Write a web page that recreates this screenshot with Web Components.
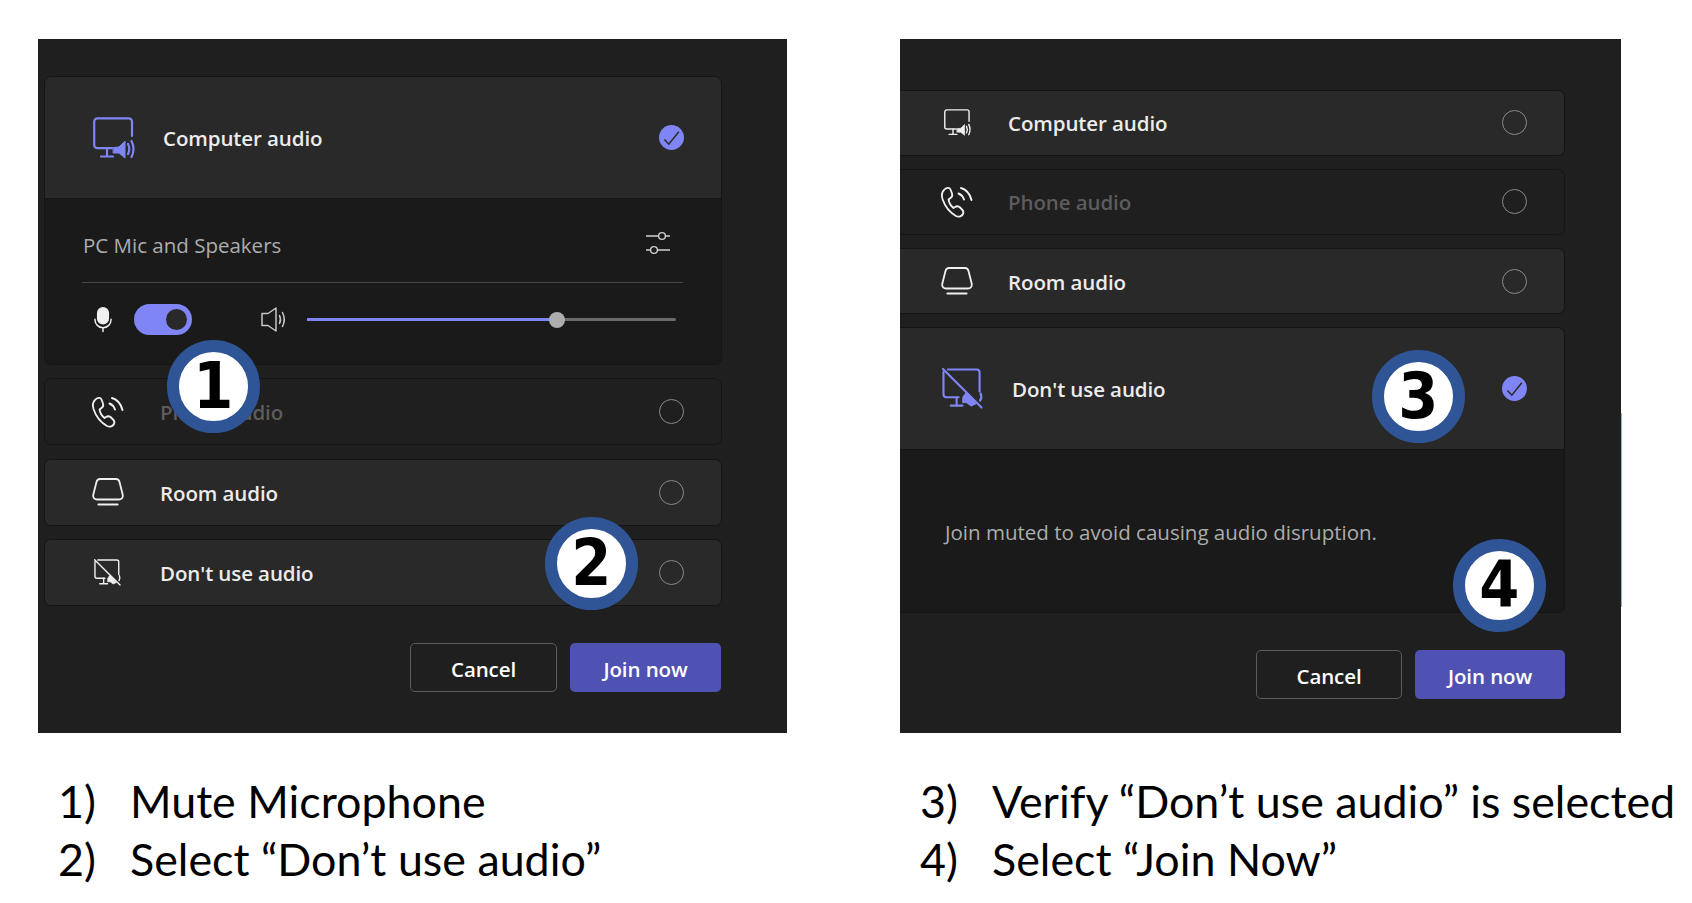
<!DOCTYPE html>
<html lang="en"><head><meta charset="utf-8"><title>Join audio steps</title>
<style>
html,body{margin:0;background:#fff}
body{width:1692px;height:903px;overflow:hidden;font-family:"Open Sans","Liberation Sans",sans-serif}
</style></head><body>
<step-page>
  <step-column>
    <dark-panel slot="panel" pad="37px 65px 0 6px">
      <option-stack gap="13.5px">
        <audio-option icon="computer" label="Computer audio" selected pad="48" cell="70" isize="42" nudge="1">
          <mic-settings></mic-settings>
        </audio-option>
        <audio-option icon="phone" label="Phone audio" disabled tall pad="47" cell="68" isize="32"></audio-option>
        <audio-option icon="room" label="Room audio" tall pad="47" cell="68" isize="32"></audio-option>
        <audio-option icon="dont" label="Don't use audio" tall pad="49" cell="66" isize="27"></audio-option>
      </option-stack>
      <action-bar top="36.500px" right="1px" cancel="147" join="151"></action-bar>
      <step-badge n="1" x="129" y="300.5"></step-badge>
      <step-badge n="2" x="506.5" y="477.5"></step-badge>
    </dark-panel>
    <step-list slot="list">
      <step-line n="1)" text="Mute Microphone"></step-line>
      <step-line n="2)" text="Select “Don’t use audio”"></step-line>
    </step-list>
  </step-column>
  <step-column>
    <dark-panel slot="panel" pad="50.5px 56px 0 0">
      <option-stack gap="13.3px">
        <audio-option icon="computer" label="Computer audio" pad="44" cell="64" isize="27" open-left></audio-option>
        <audio-option icon="phone" label="Phone audio" disabled pad="41" cell="67" isize="32" open-left></audio-option>
        <audio-option icon="room" label="Room audio" pad="41" cell="67" isize="32" open-left></audio-option>
        <audio-option icon="dont" label="Don't use audio" selected pad="42" cell="70" isize="41" open-left>
          <muted-note>Join muted to avoid causing audio disruption.</muted-note>
        </audio-option>
      </option-stack>
      <action-bar top="37px" right="0" cancel="146" join="150"></action-bar>
      <step-badge n="3" x="471.5" y="310.5"></step-badge>
      <step-badge n="4" x="552.5" y="499.5"></step-badge>
      <edge-sliver></edge-sliver>
    </dark-panel>
    <step-list slot="list">
      <step-line n="3)" text="Verify “Don’t use audio” is selected"></step-line>
      <step-line n="4)" text="Select “Join Now”"></step-line>
    </step-list>
  </step-column>
</step-page>
<script>
const ICONS={
computer:`<svg viewBox="0 0 42 42" fill="none" stroke="currentColor" stroke-width="2.2" stroke-linecap="round" stroke-linejoin="round"><path d="M39 19V4.5a3.2 3.2 0 0 0-3.2-3.2H4.400a3.2 3.2 0 0 0-3.200 3.200V28a3.200 3.200 0 0 0 3.200 3.200H19"/><path d="M14 31.500V39M8 39.500H20"/><path d="M20.500 30.500L26 30 32 24V41L26 36 20.500 36Z" fill="currentColor" stroke-width="1"/><path d="M35 27q2.600 5 0 10M38.500 24q4 8 0 16"/></svg>`,
dont:`<svg viewBox="0 0 42 42" fill="none" stroke="currentColor" stroke-width="2.200" stroke-linecap="round" stroke-linejoin="round"><path d="M6 1.500H35.500a3 3 0 0 1 3 3V24"/><path d="M1.500 4V27a3 3 0 0 0 3 3H17"/><path d="M15 30V38M9 38.500H21"/><path d="M1 1L40.500 40.500"/><path d="M21.500 29.500L25 25 35 36.500 30 39 25 35.500 21.500 35.500Z" fill="currentColor" stroke-width="1"/><path d="M39.500 26q1.800 4-.5 7.500"/></svg>`,
phone:`<svg viewBox="0 0 32 32" fill="none" stroke="currentColor" stroke-width="1.800" stroke-linecap="round" stroke-linejoin="round"><path d="M3 4C1 6 .3 9 1.500 13 3.500 19 8 26 15 30 18 31.500 21 30 22 28 23 26 22.500 25 21 23.500L18.500 21C17 20 15.500 20 14 21L12.500 22C10 20 8 16.500 7.500 13.500L9.500 12C11 11 11.500 9 11 7.500L9.500 3.500C8.500 1 5 1.500 3 4Z"/><path d="M17.500 7.500C20 8.500 22 10.500 23 13.500" stroke-width="2"/><path d="M20 2C25 3.500 29 8 30.500 14" stroke-width="2"/></svg>`,
room:`<svg viewBox="0 0 32 28" fill="none" stroke="currentColor" stroke-width="1.800" stroke-linecap="round" stroke-linejoin="round"><path d="M8 1H24C26 1 27 2 27.500 4L30.800 17C31.300 20 29 21.500 27 21.500H5C3 21.500 .7 20 1.200 17L4.500 4C5 2 6 1 8 1Z"/><path d="M6.500 26.500H25.500" stroke-width="2.200"/></svg>`,
mic:`<svg viewBox="0 0 18.400 25" fill="none" stroke="currentColor" stroke-width="1.500" stroke-linecap="round"><rect x="3" y="0" width="12.400" height="18" rx="6.200" fill="currentColor" stroke="none"/><path d="M1 12.500v.5a8.200 8.200 0 0 0 16.400 0v-.5M9.200 21.500V25"/></svg>`,
speaker:`<svg viewBox="0 0 26 25" fill="none" stroke="currentColor" stroke-width="1.500" stroke-linecap="round" stroke-linejoin="round"><path d="M1 6.500H7L15 1V24L7 18.500H1Z"/><path d="M18.500 8.500q2 4 0 8M21.500 5.500q3.500 7 0 14"/></svg>`,
sliders:`<svg viewBox="0 0 24 20" fill="none" stroke="currentColor" stroke-width="1.400"><path d="M0 4H12.500M19.500 4H24M0 18H4.500M11.500 18H24"/><circle cx="16" cy="4" r="3.400"/><circle cx="8" cy="18" r="3.400"/></svg>`
};
function el(tag,html,init){customElements.define(tag,class extends HTMLElement{constructor(){super();this.attachShadow({mode:"open"});}
 connectedCallback(){this.shadowRoot.innerHTML=typeof html==="function"?html(this):html;if(init)init(this);}});}
const a=(e,n,d)=>e.hasAttribute(n)?e.getAttribute(n):d;

el("step-page",`<style>:host{display:grid;grid-template-columns:749px 721px;column-gap:113px;padding:39px 0 0 38px;box-sizing:border-box;height:903px}</style><slot></slot>`);
el("step-column",`<style>:host{display:flex;flex-direction:column;min-width:0}</style><slot name="panel"></slot><slot name="list"></slot>`);
el("dark-panel",e=>`<style>:host{display:block;position:relative;box-sizing:border-box;height:694px;background:#1f1f1f;padding:${a(e,"pad")};color:#fff;font-family:"Open Sans","Liberation Sans",sans-serif}</style><slot></slot>`);
el("option-stack",e=>`<style>:host{display:flex;flex-direction:column;gap:${a(e,"gap")}}</style><slot></slot>`);
el("audio-option",e=>{
 const sel=e.hasAttribute("selected"),dis=e.hasAttribute("disabled"),open=e.hasAttribute("open-left"),s=a(e,"isize"),col=sel?"#7f85f5":"#f0f0f0",n=+a(e,"nudge","0");
 return `<style>:host{display:block;box-sizing:border-box;border:1px solid #151515;${open?"border-left:0;":""}border-radius:${open?"0 7px 7px 0":"7px"};overflow:hidden;background:#1a1a1a}
 .head{height:${sel?120.5:(e.hasAttribute("tall")?65:64)}px;display:flex;align-items:center;padding:0 ${open?37:37.5}px 0 ${a(e,"pad")}px;background:${dis?"#1f1f1f":"#292929"};${sel?"border-bottom:1px solid #151515;":""}}
 .cell{width:${a(e,"cell")}px;flex:none;display:flex;align-items:center;color:${col};padding-top:${n}px;}
 .label{flex:1;font-size:20.500px;font-weight:600;color:${dis?"#5c5c5c":"#ececec"};letter-spacing:-.1px;white-space:nowrap;padding-top:${1+n}px}
 </style><div class="head"><span class="cell"><audio-icon name="${a(e,"icon")}" size="${s}"></audio-icon></span><span class="label">${a(e,"label")}</span><choice-mark ${sel?"on":""}></choice-mark></div><slot></slot>`;});
el("audio-icon",e=>`<style>:host{display:block;width:${a(e,"size")}px;line-height:0}svg{display:block;width:100%;height:auto;overflow:visible}</style>${ICONS[a(e,"name")]}`);
el("choice-mark",e=>e.hasAttribute("on")?`<style>:host{display:block;width:25px;height:25px;flex:none}svg{display:block}</style><svg width="25" height="25" viewBox="0 0 25 25"><circle cx="12.500" cy="12.500" r="12.500" fill="#7f85f5"/><path d="M5.500 14.500L9.800 19.200 19.800 6.800" fill="none" stroke="#292929" stroke-width="1.500"/></svg>`:`<style>:host{display:block;box-sizing:border-box;width:25px;height:25px;flex:none;border:1.500px solid #8a8a8a;border-radius:50%}</style>`);
el("mic-settings",`<style>:host{display:block;height:165px;box-sizing:border-box;padding:0 38px 0 37px;color:#adadad}
 .top{display:flex;align-items:center;justify-content:space-between;height:84px;border-bottom:1.500px solid #474747;padding-right:13px;font-size:20.500px;font-weight:400;color:#adadad;box-sizing:border-box}
 .top span{padding-top:10px;padding-left:1px}
 .top audio-icon{color:#cfcfcf;margin-top:3px}
 .bot{display:flex;align-items:center;height:74px;padding-left:12px;color:#f0f0f0}
 .bot audio-icon+toggle-switch{margin-left:22px}
 .spk{margin-left:69px;color:#c8c8c8}
 volume-slider{margin-left:20px}
 </style><div class="top"><span>PC Mic and Speakers</span><audio-icon name="sliders" size="24"></audio-icon></div>
 <div class="bot"><audio-icon name="mic" size="18"></audio-icon><toggle-switch></toggle-switch><audio-icon class="spk" name="speaker" size="26"></audio-icon><volume-slider></volume-slider></div>`);
el("toggle-switch",`<style>:host{display:flex;align-items:center;justify-content:flex-end;box-sizing:border-box;width:58px;height:31px;border-radius:16px;background:#7f85f5;padding-right:5px}i{display:block;width:21px;height:21px;border-radius:50%;background:#292929}</style><i></i>`);
el("volume-slider",`<style>:host{display:block;position:relative;width:369px;height:3px;background:#6b6b6b;border-radius:2px}b{display:block;width:250px;height:3px;background:#7f85f5}i{position:absolute;left:242px;top:-6.500px;width:16px;height:16px;border-radius:50%;background:#adadad}</style><b></b><i></i>`);
el("muted-note",`<style>:host{display:block;box-sizing:border-box;height:162px;padding:68px 0 0 45px;font-size:20.500px;color:#adadad;white-space:nowrap}</style><slot></slot>`);
el("action-bar",e=>`<style>:host{display:flex;justify-content:flex-end;gap:13px;margin-top:${a(e,"top")};margin-right:${a(e,"right")}}
 span{display:flex;align-items:center;justify-content:center;box-sizing:border-box;height:49px;padding-top:4px;border-radius:5px;font-size:20.500px;font-weight:600;letter-spacing:-.1px;color:#fff}
 .c{width:${a(e,"cancel")}px;border:1.500px solid #5c5c5c}.j{width:${a(e,"join")}px;background:#4f52b2}</style><span class="c">Cancel</span><span class="j">Join now</span>`);
el("step-badge",e=>`<style>:host{position:absolute;left:${a(e,"x")}px;top:${a(e,"y")}px;box-sizing:border-box;width:93px;height:93px;border:12px solid #2f5597;border-radius:50%;background:#fff;display:flex;align-items:center;justify-content:center;font:700 64px/1 "DejaVu Sans",sans-serif;color:#000}span{display:block;transform:scaleX(.9)}</style><span>${a(e,"n")}</span>`);
el("edge-sliver",`<style>:host{position:absolute;left:100%;top:374px;width:1px;height:194px;background:#7fb05c;opacity:.8}</style>`);
el("step-list",`<style>:host{display:block;padding:39px 0 0 20px;font:400 44.8px/58px "Lato","Liberation Sans",sans-serif;color:#000}</style><slot></slot>`);
el("step-line",e=>`<style>:host{display:flex;white-space:nowrap}b{font-weight:400;width:72px;flex:none}</style><b>${a(e,"n")}</b><span>${a(e,"text")}</span>`);
</script>
</body></html>
